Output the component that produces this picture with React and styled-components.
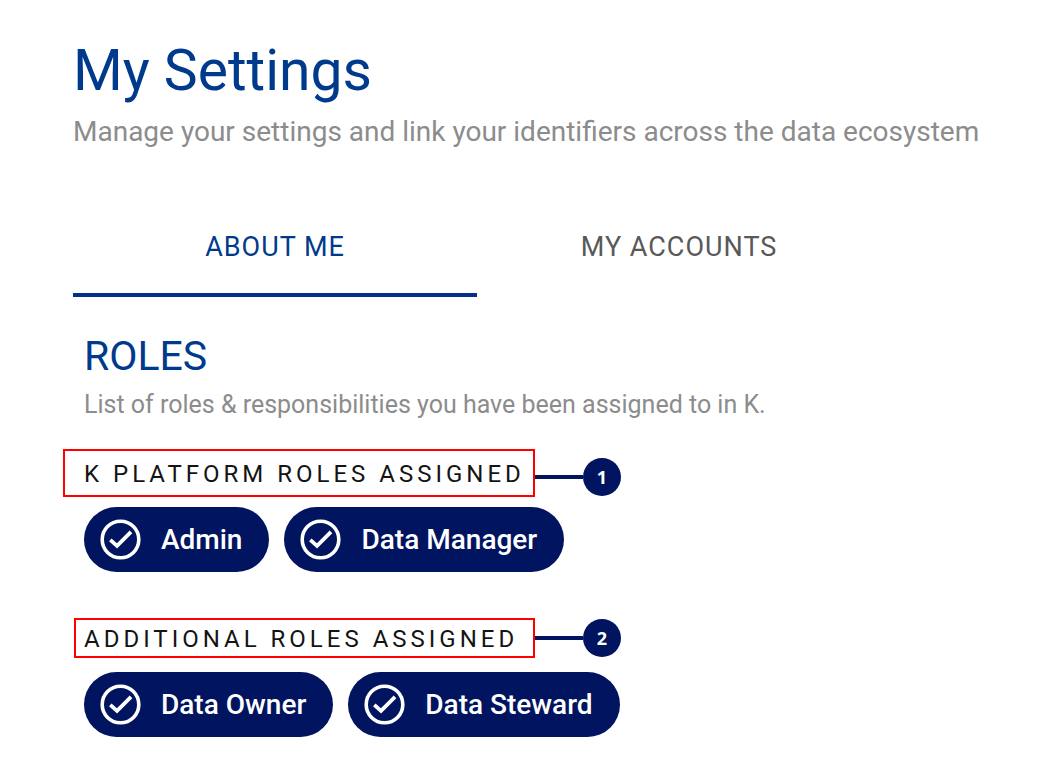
import React, { useState } from "react";
import styled, { createGlobalStyle } from "styled-components";

const GlobalStyle = createGlobalStyle`
  * { box-sizing: border-box; }
  body {
    margin: 0;
    background: #ffffff;
    font-family: Roboto, "Liberation Sans", sans-serif;
  }
`;

const Page = styled.main`
  padding: 37px 32px 44px 63px;
`;

const Header = styled.header`
  padding-left: 10px;
`;

const Title = styled.h1`
  margin: 0;
  color: #003a8c;
  font-size: 57px;
  font-weight: 400;
  line-height: 68px;
`;

const Subtitle = styled.p`
  margin: 7px 0 0;
  color: #8c8c8c;
  font-size: 28px;
  line-height: 40px;
`;

const Tabs = styled.div`
  display: flex;
  max-width: 808px;
  margin: 45px 0 0 10px;
`;

const Tab = styled.button`
  flex: 1;
  height: 100px;
  padding: 4px 0 0;
  border: 0;
  border-bottom: 4px solid ${(p) => (p.$active ? "#003087" : "transparent")};
  background: none;
  color: ${(p) => (p.$active ? "#003a8c" : "#595959")};
  font: inherit;
  font-size: 27px;
  letter-spacing: 1px;
  cursor: pointer;
`;

const SectionHead = styled.div`
  padding: 35px 0 28px 21px;
`;

const SectionTitle = styled.h2`
  margin: 0;
  color: #003a8c;
  font-size: 41px;
  font-weight: 400;
  line-height: 48px;
`;

const SectionText = styled.p`
  margin: 9px 0 0;
  color: #8c8c8c;
  font-size: 25px;
  line-height: 32px;
`;

const RoleGroup = styled.section`
  & + & {
    margin-top: 46px;
  }
`;

const GroupHead = styled.div`
  display: flex;
  align-items: flex-end;
  padding-left: ${(p) => (p.$compact ? 11 : 0)}px;
`;

const GroupTitle = styled.h3`
  display: flex;
  align-items: center;
  width: ${(p) => (p.$compact ? 461 : 472)}px;
  height: ${(p) => (p.$compact ? 40 : 48)}px;
  margin: 0;
  padding: 2px 0 0 ${(p) => (p.$compact ? 8 : 19)}px;
  border: 2px solid #ff0000;
  color: #141414;
  font-size: 24px;
  font-weight: 400;
  letter-spacing: 4px;
  white-space: nowrap;
`;

const Callout = styled.div`
  display: flex;
  align-items: center;
  padding-bottom: 1px;
`;

const Connector = styled.span`
  width: 48px;
  height: 4px;
  background: #001460;
`;

const Marker = styled.span`
  display: flex;
  align-items: center;
  justify-content: center;
  width: 38px;
  height: 38px;
  border-radius: 50%;
  background: #001460;
  color: #ffffff;
  font-family: "Open Sans", "Noto Sans", sans-serif;
  font-size: 18px;
  font-weight: 700;
`;

const Chips = styled.ul`
  display: flex;
  flex-wrap: wrap;
  gap: 15px;
  margin: 0;
  padding: ${(p) => (p.$compact ? 14 : 10)}px 0 0 21px;
  list-style: none;
`;

const Chip = styled.li`
  display: flex;
  align-items: center;
  gap: 20px;
  height: 65px;
  padding: 0 27px 0 16px;
  border-radius: 33px;
  background: #001460;
  color: #ffffff;
  font-size: 28px;
  font-weight: 500;
  white-space: nowrap;
`;

const CheckIcon = () => (
  <svg width="41" height="41" viewBox="0 0 41 41" fill="none" stroke="#ffffff" aria-hidden="true">
    <circle cx="20.5" cy="20.5" r="18.3" strokeWidth="3.6" />
    <path d="M10.3 20.8 L17 26.8 L31 12.8" strokeWidth="3.8" />
  </svg>
);

const groups = [
  { title: "K PLATFORM ROLES ASSIGNED", roles: ["Admin", "Data Manager"] },
  { title: "ADDITIONAL ROLES ASSIGNED", roles: ["Data Owner", "Data Steward"], compact: true },
];

const tabs = ["ABOUT ME", "MY ACCOUNTS"];

export default function App() {
  const [active, setActive] = useState(0);
  return (
    <Page>
      <GlobalStyle />
      <Header>
        <Title>My Settings</Title>
        <Subtitle>Manage your settings and link your identifiers across the data ecosystem</Subtitle>
      </Header>
      <Tabs role="tablist">
        {tabs.map((label, i) => (
          <Tab
            key={label}
            type="button"
            role="tab"
            aria-selected={i === active}
            $active={i === active}
            onClick={() => setActive(i)}
          >
            {label}
          </Tab>
        ))}
      </Tabs>
      <SectionHead>
        <SectionTitle>ROLES</SectionTitle>
        <SectionText>List of roles &amp; responsibilities you have been assigned to in K.</SectionText>
      </SectionHead>
      {groups.map((group, i) => (
        <RoleGroup key={group.title}>
          <GroupHead $compact={group.compact}>
            <GroupTitle $compact={group.compact}>{group.title}</GroupTitle>
            <Callout>
              <Connector />
              <Marker>{i + 1}</Marker>
            </Callout>
          </GroupHead>
          <Chips $compact={group.compact}>
            {group.roles.map((role) => (
              <Chip key={role}>
                <CheckIcon />
                {role}
              </Chip>
            ))}
          </Chips>
        </RoleGroup>
      ))}
    </Page>
  );
}
